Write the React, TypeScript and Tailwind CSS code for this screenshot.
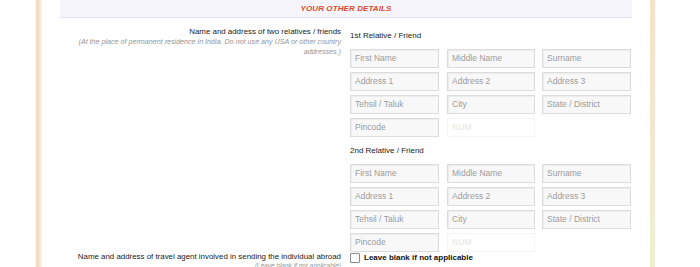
import React from "react";

const font = { fontFamily: '"Liberation Sans", Arial, sans-serif' };

function Field({ ph, w, faint }: { ph: string; w: string; faint?: boolean }) {
  return (
    <div
      className={`${w} h-[19px] flex items-center pl-[4px] text-[8.5px] leading-none ${
        faint
          ? "border border-[#f5f5f5] bg-white text-[#e4e4e4]"
          : "border border-[#dcdcdc] bg-[#f8f8f9] text-[#9c9c9c] shadow-[inset_1px_1px_1px_rgba(0,0,0,0.05)]"
      }`}
    >
      {ph}
    </div>
  );
}

function Grid() {
  const rows = [
    ["First Name", "Middle Name", "Surname"],
    ["Address 1", "Address 2", "Address 3"],
    ["Tehsil / Taluk", "City", "State / District"],
  ];
  return (
    <div className="flex flex-col gap-[4px]">
      {rows.map((r, i) => (
        <div key={i} className="flex">
          <Field ph={r[0]} w="w-[89px]" />
          <div className="w-[8px]" />
          <Field ph={r[1]} w="w-[88px]" />
          <div className="w-[7px]" />
          <Field ph={r[2]} w="w-[89px]" />
        </div>
      ))}
      <div className="flex">
        <Field ph="Pincode" w="w-[89px]" />
        <div className="w-[8px]" />
        <Field ph="NUM" w="w-[88px]" faint />
      </div>
    </div>
  );
}

export default function App() {
  return (
    <div className="w-[700px] h-[267px] overflow-hidden bg-white flex" style={font}>
      <div className="w-[35px] shrink-0" />
      <div className="w-[7px] shrink-0 bg-[linear-gradient(to_right,#fdf3e8,#f4d6b2,#f7e6d2,#eef7f7)]" />
      <div className="w-[608px] shrink-0 pl-[18px] pr-[18px]">
        <div className="h-[18px] bg-[#f5f5fb] border-b border-[#e2e2ec] flex items-center justify-center">
          <span className="text-[8px] font-bold italic text-[#e0482c] tracking-[0.1px]">
            YOUR OTHER DETAILS
          </span>
        </div>
        <div className="flex pt-[9px]">
          <div className="w-[282px] shrink-0 text-right pr-[1px]">
            <div className="text-[7.9px] leading-[10px] text-[#222]">
              Name and address of two relatives / friends
            </div>
            <div className="text-[7.15px] leading-[10px] italic text-[#959595] pl-[4px]">
              (At the place of permanent residence in India. Do not use any USA or other country addresses.)
            </div>
          </div>
          <div className="ml-[8px] pt-[4px]">
            <div className="text-[8px] leading-[10px] text-[#222] mb-[8px]">1st Relative / Friend</div>
            <Grid />
            <div className="text-[8px] leading-[10px] text-[#222] mt-[9px] mb-[8px]">2nd Relative / Friend</div>
            <Grid />
          </div>
        </div>
        <div className="flex">
          <div className="w-[282px] shrink-0 text-right pr-[1px]">
            <div className="text-[7.9px] leading-[10px] text-[#222] whitespace-nowrap">
              Name and address of travel agent involved in sending the individual abroad
            </div>
            <div className="text-[6.5px] leading-[8px] italic text-[#959595]">
              (Leave blank if not applicable)
            </div>
          </div>
          <div className="ml-[8px] pt-[1px] flex items-start">
            <div className="w-[10px] h-[10px] border border-[#8a8a8a] rounded-[1px] bg-white" />
            <span className="ml-[4px] text-[8px] leading-[10px] font-bold text-[#111]">
              Leave blank if not applicable
            </span>
          </div>
        </div>
      </div>
      <div className="w-[5px] shrink-0 bg-[linear-gradient(to_bottom,#f7e2c8,#f2e8cf,#eef0cf)]" />
    </div>
  );
}
